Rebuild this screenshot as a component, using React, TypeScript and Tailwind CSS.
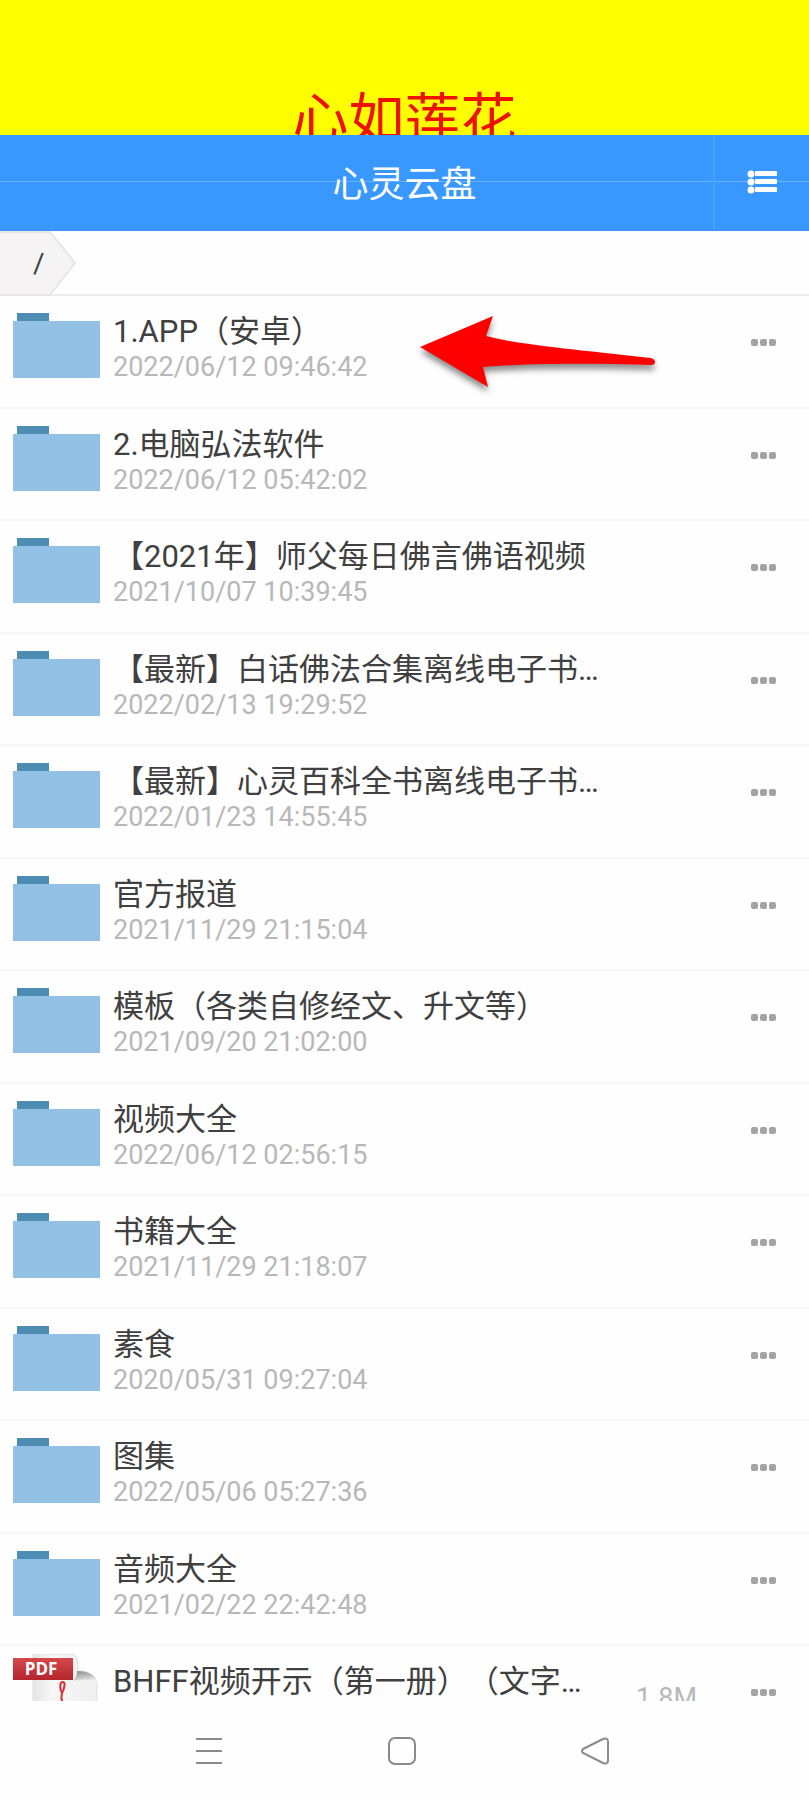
type Entry = {
  name: string;
  date: string;
  marked?: boolean;
};

const folders: Entry[] = [
  { name: "1.APP（安卓）", date: "2022/06/12 09:46:42", marked: true },
  { name: "2.电脑弘法软件", date: "2022/06/12 05:42:02" },
  { name: "【2021年】师父每日佛言佛语视频", date: "2021/10/07 10:39:45" },
  { name: "【最新】白话佛法合集离线电子书…", date: "2022/02/13 19:29:52" },
  { name: "【最新】心灵百科全书离线电子书…", date: "2022/01/23 14:55:45" },
  { name: "官方报道", date: "2021/11/29 21:15:04" },
  { name: "模板（各类自修经文、升文等）", date: "2021/09/20 21:02:00" },
  { name: "视频大全", date: "2022/06/12 02:56:15" },
  { name: "书籍大全", date: "2021/11/29 21:18:07" },
  { name: "素食", date: "2020/05/31 09:27:04" },
  { name: "图集", date: "2022/05/06 05:27:36" },
  { name: "音频大全", date: "2021/02/22 22:42:48" },
];

function FolderIcon() {
  return (
    <svg className="w-[87px] h-[65px] shrink-0" viewBox="0 0 87 65">
      <rect x="4" y="0" width="32" height="12" fill="#4d8db3" />
      <rect x="0" y="8" width="87" height="57" fill="#93c1e5" />
    </svg>
  );
}

function PdfIcon() {
  return (
    <svg className="w-[87px] h-[100px] shrink-0" viewBox="0 0 87 100">
      <defs>
        <linearGradient id="page" x1="0" y1="0" x2="1" y2="0">
          <stop offset="0" stopColor="#e4e4e4" />
          <stop offset="0.3" stopColor="#f7f7f7" />
          <stop offset="1" stopColor="#efefef" />
        </linearGradient>
        <linearGradient id="fold" x1="0" y1="0" x2="0.3" y2="1">
          <stop offset="0" stopColor="#8a8a8a" />
          <stop offset="0.6" stopColor="#c4c4c4" />
          <stop offset="1" stopColor="#f4f4f4" />
        </linearGradient>
        <linearGradient id="label" x1="0" y1="0" x2="0" y2="1">
          <stop offset="0" stopColor="#d5494d" />
          <stop offset="1" stopColor="#b3262c" />
        </linearGradient>
      </defs>
      <path
        d="M20 0H58C63 0 65 4 65 17C75 17 83 21 84 30V100H20Z"
        fill="url(#page)"
        stroke="#dedede"
      />
      <path d="M64 17C74 17 83 20 84 29C78 25 70 25 60 27C63 24 64 20 64 17Z" fill="url(#fold)" />
      <path
        d="M50 28C46 28 47 36 49 39C51 36 53 28 50 28ZM49 39C48 44 48 46 51 50"
        fill="none"
        stroke="#d3302f"
        strokeWidth="2"
      />
      <rect x="-1" y="4" width="61" height="22" fill="url(#label)" />
      <text
        x="28"
        y="21"
        textAnchor="middle"
        className="font-['Open_Sans'] font-bold text-[17px]"
        fill="#fff"
      >
        PDF
      </text>
    </svg>
  );
}

function MoreButton() {
  return (
    <button aria-label="更多" className="absolute right-[33px] top-[43px] flex gap-[2px]">
      <span className="size-[7px] rounded-[2px] bg-[#a3a3a3]" />
      <span className="size-[7px] rounded-[2px] bg-[#a3a3a3]" />
      <span className="size-[7px] rounded-[2px] bg-[#a3a3a3]" />
    </button>
  );
}

function Arrow() {
  return (
    <svg
      className="absolute left-[420px] top-[15px] w-[240px] h-[90px] drop-shadow-[0_5px_3px_rgba(0,0,0,0.45)]"
      viewBox="0 0 240 90"
    >
      <path
        d="M0 36L73 5L66 25C100 34 160 39 231 47Q235 48 235 51Q235 54 231 54C170 52 110 52 63 56L68 76Z"
        fill="#fe0000"
      />
    </svg>
  );
}

function Row({ name, date, marked }: Entry) {
  return (
    <li className="relative flex min-h-[113px] even:min-h-[112px] gap-[13px] border-b-2 border-[#f6f6f6] pl-[13px] pt-[17px]">
      <FolderIcon />
      <div className="min-w-0">
        <a href="#" className="block truncate pt-px text-[31px] leading-[36px] text-[#404040]">
          {name}
        </a>
        <p className="text-[27px] leading-[35px] text-[#b8b8b8]">{date}</p>
      </div>
      {marked && <Arrow />}
      <MoreButton />
    </li>
  );
}

export default function App() {
  return (
    <div className="flex h-screen flex-col overflow-hidden bg-[#fefefe] font-[Roboto,'Noto_Sans_CJK_SC',sans-serif] [text-spacing-trim:space-all]">
      <div className="h-[135px] shrink-0 overflow-hidden bg-[#ffff00] pt-[92px] text-center">
        <p className="text-[56px] leading-[56px] text-[#ee1100]">心如莲花</p>
      </div>

      <header className="relative flex h-24 shrink-0 items-center justify-center bg-[#3898ff]">
        <div className="absolute inset-x-0 top-[46px] h-px bg-[#66b3fb]" />
        <h1 className="relative pt-1 text-[36px] leading-[48px] text-white">心灵云盘</h1>
        <button
          aria-label="列表"
          className="absolute inset-y-0 right-0 flex w-24 items-center justify-center border-l-2 border-[#46a0ff] pb-0.5"
        >
          <svg className="h-6 w-[30px]" viewBox="0 0 30 24" fill="#fff">
            <circle cx="4" cy="4" r="3.5" />
            <circle cx="4" cy="12" r="3.5" />
            <circle cx="4" cy="20" r="3.5" />
            <rect x="8" y="1" width="22" height="5" rx="1" />
            <rect x="8" y="9" width="22" height="5" rx="1" />
            <rect x="8" y="17" width="22" height="5" rx="1" />
          </svg>
        </button>
      </header>

      <nav className="relative h-[65px] shrink-0 border-b-2 border-[#ebebeb]">
        <svg className="absolute left-0 top-0 h-[65px] w-20" viewBox="0 0 80 65">
          <path d="M-2 1H50L75 32L50 64H-2Z" fill="#f5f3f3" stroke="#e6e6e6" strokeWidth="2" />
        </svg>
        <a href="#" className="relative block pl-[33px] pt-0.5 text-[28px] leading-[62px] text-[#404040]">
          /
        </a>
      </nav>

      <main className="min-h-0 flex-1 overflow-hidden">
        <ul>
          {folders.map((folder) => (
            <Row key={folder.name} {...folder} />
          ))}
          <li className="relative flex gap-[13px] pl-[13px] pt-2">
            <PdfIcon />
            <a href="#" className="truncate pt-[10px] text-[31px] leading-[36px] text-[#404040]">
              BHFF视频开示（第一册）（文字…
            </a>
            <span className="absolute right-28 top-[34px] text-[27px] leading-[36px] text-[#b8b8b8]">
              1.8M
            </span>
            <MoreButton />
          </li>
        </ul>
      </main>

      <footer className="flex h-[99px] shrink-0 items-center justify-center gap-[165px] pr-1.5 text-[#8a8a8a]">
        <button aria-label="菜单">
          <svg className="size-7" viewBox="0 0 28 28" fill="none" stroke="currentColor" strokeWidth="2">
            <path d="M1 2H27M1 14H27M1 26H27" />
          </svg>
        </button>
        <button aria-label="主页">
          <svg className="size-7" viewBox="0 0 28 28" fill="none" stroke="currentColor" strokeWidth="2">
            <rect x="1" y="1" width="26" height="26" rx="6" />
          </svg>
        </button>
        <button aria-label="返回">
          <svg className="size-7" viewBox="0 0 28 28" fill="none" stroke="currentColor" strokeWidth="2">
            <path d="M2 12L22 2Q27 0 27 5V23Q27 28 22 26L2 16Q0 14 2 12Z" />
          </svg>
        </button>
      </footer>
    </div>
  );
}
